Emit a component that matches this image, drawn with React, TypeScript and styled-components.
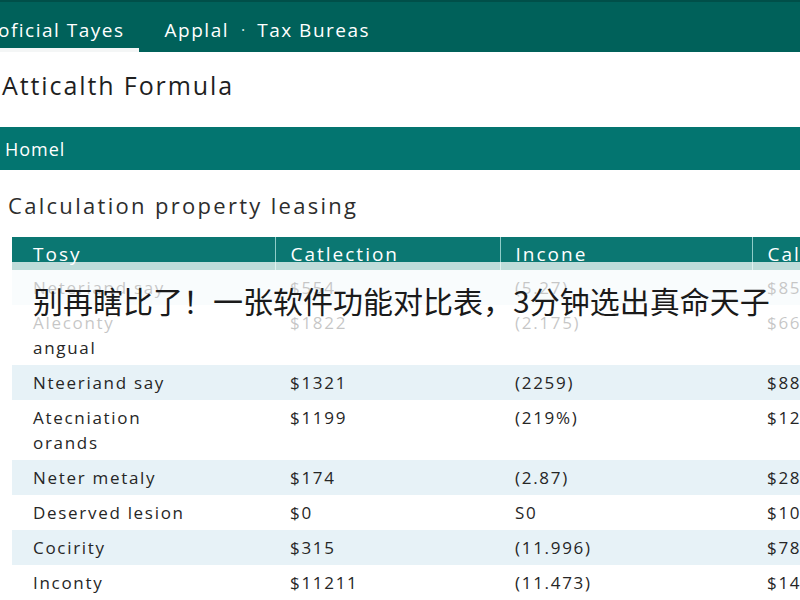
import React from 'react';
import styled, { createGlobalStyle } from 'styled-components';

const GlobalStyle = createGlobalStyle`
  html, body {
    margin: 0;
    padding: 0;
    background: #fff;
    overflow: hidden;
  }
  body {
    font-family: 'Open Sans', 'Noto Sans', Arial, sans-serif;
    color: #2b2b2b;
  }
  * { box-sizing: border-box; }
`;

interface Row {
  name: string[];
  collection: string;
  income: string;
  calc: string;
}

const ROWS: Row[] = [
  { name: ['Neteriand say'], collection: '$554', income: '(5.27)', calc: '$857' },
  { name: ['Aleconty', 'angual'], collection: '$1822', income: '(2.175)', calc: '$660' },
  { name: ['Nteeriand say'], collection: '$1321', income: '(2259)', calc: '$884' },
  { name: ['Atecniation', 'orands'], collection: '$1199', income: '(219%)', calc: '$1287' },
  { name: ['Neter metaly'], collection: '$174', income: '(2.87)', calc: '$282' },
  { name: ['Deserved lesion'], collection: '$0', income: 'S0', calc: '$1012' },
  { name: ['Cocirity'], collection: '$315', income: '(11.996)', calc: '$782' },
  { name: ['Inconty'], collection: '$11211', income: '(11.473)', calc: '$1490' },
  { name: ['Totals'], collection: '$16794', income: '(41.55)', calc: '$7254' },
];

const Page = styled('div')`
  width: 800px;
  height: 600px;
  overflow: hidden;
`;

const TopNav = styled('nav')`
  display: flex;
  align-items: stretch;
  height: 52px;
  padding-top: 10px;
  background: #00615a;
  border-top: 2px solid #004f49;
`;

const Tab = styled('div')<{ $active?: boolean }>`
  display: flex;
  align-items: center;
  padding: ${(p) => (p.$active ? '0 14px 0 0' : '0 8px')};
  margin-left: ${(p) => (p.$active ? '-2px' : '0')};
  font-size: 19px;
  letter-spacing: 1.5px;
  color: #fff;
  border-bottom: 4px solid ${(p) => (p.$active ? '#f4f6f6' : 'transparent')};
  &:nth-child(2) {
    margin-left: 18px;
  }
`;

const Dot = styled('span')`
  display: flex;
  align-items: center;
  padding: 0 4px 4px;
  font-size: 16px;
  color: #d9ecea;
`;

const Title = styled('h1')`
  margin: 0;
  padding: 18px 0 27px 2px;
  font-size: 25px;
  line-height: 30px;
  font-weight: 400;
  letter-spacing: 1.9px;
  color: #1f1f1f;
`;

const Crumb = styled('div')`
  height: 43px;
  display: flex;
  align-items: center;
  padding-left: 5px;
  background: #037570;
  color: #fff;
  font-size: 18px;
  letter-spacing: 1px;
`;

const Subtitle = styled('h2')`
  margin: 0;
  padding: 21px 0 18px 8px;
  font-size: 22px;
  line-height: 28px;
  font-weight: 400;
  letter-spacing: 2.3px;
  color: #2d2d2d;
`;

const TableWrap = styled('div')`
  position: relative;
  margin-left: 12px;
`;

const Table = styled('table')`
  border-collapse: collapse;
  table-layout: fixed;
  width: 960px;
`;

const Th = styled('th')<{ $w: number; $pad: number }>`
  width: ${(p) => p.$w}px;
  height: 33px;
  padding: 0 0 0 ${(p) => p.$pad}px;
  text-align: left;
  font-size: 19px;
  font-weight: 500;
  letter-spacing: 2px;
  color: #fff;
  background: #0b7772;
  border-left: 1px solid #8fcdc8;
  white-space: nowrap;
  overflow: hidden;
  &:first-child {
    border-left: none;
  }
`;

const Tr = styled('tr')<{ $shade: boolean }>`
  background: ${(p) => (p.$shade ? '#e7f2f7' : '#fff')};
`;

const Td = styled('td')<{ $pad: number }>`
  padding: 5px 0 5px ${(p) => p.$pad}px;
  vertical-align: top;
  font-size: 17px;
  line-height: 25px;
  letter-spacing: 1.7px;
  color: #262626;
  white-space: nowrap;
  overflow: hidden;
`;

const NameLine = styled('div')``;

// caption band laid over the top of the table body
const Caption = styled('div')`
  position: absolute;
  left: -12px;
  top: 25px;
  width: 800px;
  height: 76px;
  display: flex;
  align-items: center;
  padding: 0 0 0 33px;
  background: rgba(255, 255, 255, 0.74);
  font-family: 'Noto Sans CJK SC', 'Noto Sans', sans-serif;
  font-size: 30px;
  color: #1a1a1a;
  white-space: nowrap;
`;

const COLS = [
  { label: 'Tosy', w: 263, pad: 21 },
  { label: 'Catlection', w: 225, pad: 15 },
  { label: 'Incone', w: 252, pad: 15 },
  { label: 'Calculated', w: 220, pad: 15 },
];

export default function App() {
  return (
    <Page>
      <GlobalStyle />
      <TopNav>
        <Tab $active>oficial Tayes</Tab>
        <Tab>Applal</Tab>
        <Dot>·</Dot>
        <Tab>Tax Bureas</Tab>
      </TopNav>

      <Title>Atticalth Formula</Title>
      <Crumb>Homel</Crumb>
      <Subtitle>Calculation property leasing</Subtitle>

      <TableWrap>
        <Table>
          <thead>
            <tr>
              {COLS.map((c) => (
                <Th key={c.label} $w={c.w} $pad={c.pad}>
                  {c.label}
                </Th>
              ))}
            </tr>
          </thead>
          <tbody>
            {ROWS.map((r, i) => (
              <Tr key={i} $shade={i % 2 === 0}>
                <Td $pad={COLS[0].pad}>
                  {r.name.map((n) => (
                    <NameLine key={n}>{n}</NameLine>
                  ))}
                </Td>
                <Td $pad={COLS[1].pad}>{r.collection}</Td>
                <Td $pad={COLS[2].pad}>{r.income}</Td>
                <Td $pad={COLS[3].pad}>{r.calc}</Td>
              </Tr>
            ))}
          </tbody>
        </Table>
        <Caption>别再瞎比了！一张软件功能对比表，3分钟选出真命天子</Caption>
      </TableWrap>
    </Page>
  );
}
